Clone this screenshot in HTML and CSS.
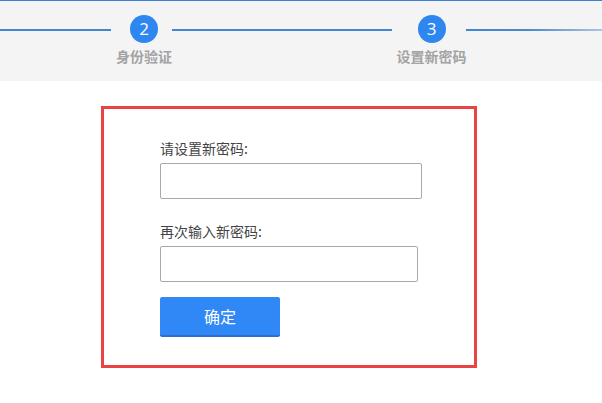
FILE: index.html
```html
<!DOCTYPE html>
<html lang="zh-CN">
<head>
<meta charset="utf-8">
<title>设置新密码</title>
<link rel="stylesheet" href="styles.css">
</head>
<body>
<div class="steps">
  <div class="line line-first"></div>
  <div class="step step-two">
    <div class="circle">2</div>
    <div class="step-label">身份验证</div>
  </div>
  <div class="line line-mid"></div>
  <div class="step step-three">
    <div class="circle">3</div>
    <div class="step-label">设置新密码</div>
  </div>
  <div class="line line-last"></div>
</div>
<div class="panel">
  <form class="form">
    <label class="field-label">请设置新密码:</label>
    <input class="field field-wide" type="password">
    <label class="field-label field-label-second">再次输入新密码:</label>
    <input class="field field-narrow" type="password">
    <button class="btn" type="button">确定</button>
  </form>
</div>
</body>
</html>
```
FILE: styles.css
```css
* { box-sizing: border-box; }
html, body { margin: 0; padding: 0; background: #fff; }
body {
  font-family: "Microsoft YaHei", "Noto Sans CJK SC", "Noto Sans", sans-serif;
  color: #333;
}
.steps {
  display: flex;
  align-items: flex-start;
  height: 81px;
  background: #f4f4f4;
  border-top: 1px solid #3b82d0;
}
.line {
  height: 2px;
  margin-top: 28px;
  background: #4286cf;
}
.line-first { width: 111px; }
.line-mid { width: 220px; }
.line-last {
  flex: 1;
  background: linear-gradient(to right, #4286cf 0%, #4a88cc 45%, #aec3e0 100%);
}
.step {
  display: flex;
  flex-direction: column;
  align-items: center;
  padding-left: 5px;
  padding-top: 14px;
}
.step-two { width: 61px; }
.step-three { width: 74px; }
.circle {
  width: 28px;
  height: 28px;
  border-radius: 50%;
  background: #2e86f1;
  color: #fff;
  font-family: "Open Sans", "Noto Sans", sans-serif;
  font-size: 17px;
  line-height: 28px;
  text-align: center;
}
.step-label {
  margin-top: 5px;
  font-size: 14px;
  line-height: 17px;
  font-weight: bold;
  color: #a3a3a3;
  white-space: nowrap;
}
.panel {
  margin: 25px 0 0 101px;
  width: 376px;
  height: 262px;
  border: 3px solid #e84444;
  padding: 29px 0 0 56px;
}
.form {
  display: flex;
  flex-direction: column;
  align-items: flex-start;
}
.field-label {
  font-size: 14px;
  line-height: 20px;
  color: #444;
}
.field-label-second { margin-top: 22px; }
.field {
  margin-top: 5px;
  height: 36px;
  border: 1px solid #a9a9a9;
  border-radius: 2px;
  background: #fff;
  outline: none;
}
.field-wide { width: 262px; }
.field-narrow { width: 258px; }
.btn {
  margin-top: 15px;
  width: 120px;
  height: 40px;
  border: none;
  border-bottom: 2px solid #2a6fd0;
  border-radius: 2px;
  background: #2f88f5;
  color: #fff;
  font-family: "Microsoft YaHei", "Noto Sans CJK SC", sans-serif;
  font-size: 16px;
  padding: 0;
}
```
